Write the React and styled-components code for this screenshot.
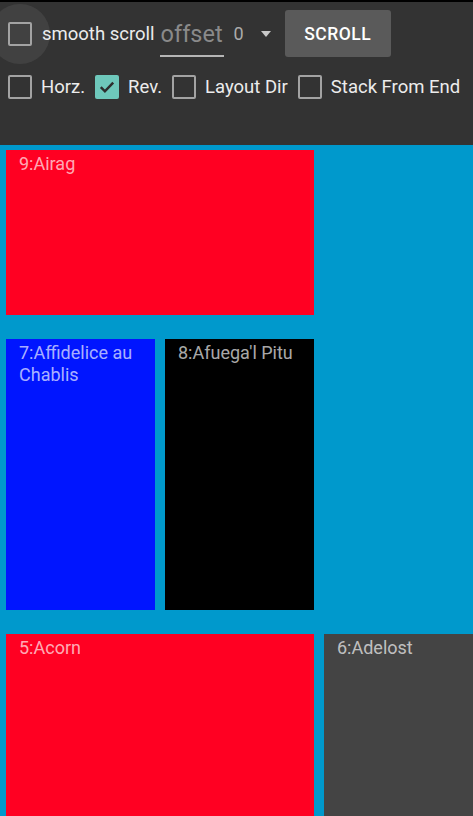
import React from 'react';
import styled, { createGlobalStyle } from 'styled-components';

const GlobalStyle = createGlobalStyle`
  html, body {
    margin: 0;
    padding: 0;
    background: #0099cc;
  }
  body {
    font-family: Roboto, "Noto Sans", sans-serif;
    overflow: hidden;
  }
`;

const Screen = styled.div`
  width: 473px;
  height: 816px;
  background: #0099cc;
  overflow: hidden;
`;

const Toolbar = styled.div`
  box-sizing: border-box;
  height: 145px;
  border-top: 2px solid #000;
  background: #333333;
  padding: 8px 0 0 8px;
`;

const TopRow = styled.div`
  display: flex;
  align-items: center;
  height: 47px;
`;

const OptionRow = styled.div`
  display: flex;
  align-items: center;
  height: 24px;
  margin-top: 18px;
  gap: 10px;
`;

const CheckItem = styled.label`
  position: relative;
  display: flex;
  align-items: center;
  gap: ${p => (p.$wide ? '10px' : '9px')};
  color: #ececec;
  font-size: 18.5px;
  white-space: nowrap;
`;

const Ripple = styled.span`
  position: absolute;
  left: -18px;
  top: 50%;
  width: 60px;
  height: 60px;
  margin-top: -30px;
  border-radius: 50%;
  background: rgba(255, 255, 255, 0.07);
`;

const Box = styled.span`
  position: relative;
  flex: none;
  box-sizing: border-box;
  width: 24px;
  height: 24px;
  border-radius: 2px;
  border: ${p => (p.$checked ? 'none' : '2.5px solid #a3a3a3')};
  background: ${p => (p.$checked ? '#6ec8bb' : 'transparent')};
  display: flex;
  align-items: center;
  justify-content: center;
`;

const OffsetField = styled.div`
  align-self: stretch;
  display: flex;
  align-items: center;
  margin-left: 5px;
  padding: 2px 1px 0;
  width: 64px;
  border-bottom: 2px solid #b5b5b5;
  box-sizing: border-box;
  color: #8a8a8a;
  font-size: 23.5px;
`;

const Spinner = styled.div`
  display: flex;
  align-items: center;
  margin-left: 10px;
  color: #ababab;
  font-size: 18px;
`;

const Caret = styled.span`
  margin-left: 17px;
  width: 0;
  height: 0;
  border-left: 5.5px solid transparent;
  border-right: 5.5px solid transparent;
  border-top: 6px solid #c8c8c8;
`;

const ScrollButton = styled.button`
  margin-left: 14px;
  width: 106px;
  height: 47px;
  border: none;
  border-radius: 3px;
  background: #5a5a5a;
  color: #ffffff;
  font-family: Roboto, "Noto Sans", sans-serif;
  font-size: 17.5px;
  font-weight: 500;
  letter-spacing: 0.5px;
  padding: 0;
`;

const Grid = styled.div`
  display: grid;
  grid-template-columns: repeat(3, 149px);
  grid-template-rows: 165px 271px 182px;
  column-gap: 10px;
  row-gap: 24px;
  padding: 5px 0 0 6px;
`;

const Card = styled.div`
  grid-column: span ${p => p.$span || 1};
  background: ${p => p.$color};
  color: rgba(255, 255, 255, 0.68);
  font-size: 18px;
  line-height: 21.5px;
  padding: 3px 13px 0;
`;

const CheckBox = ({ checked, label, ripple }) => (
  <CheckItem $wide={ripple}>
    {ripple && <Ripple />}
    <Box $checked={checked}>
      {checked && (
        <svg width="20" height="20" viewBox="0 0 20 20">
          <path d="M3.8 10.2l4.1 4.1 8.3-8.6" fill="none" stroke="#2e2e2e" strokeWidth="2.5" />
        </svg>
      )}
    </Box>
    {label}
  </CheckItem>
);

const cards = [
  { id: 9, name: 'Airag', color: '#ff0022', span: 2 },
  { id: 'gap', empty: true },
  { id: 7, name: 'Affidelice au Chablis', color: '#0015ff' },
  { id: 8, name: "Afuega'l Pitu", color: '#000000' },
  { id: 'gap2', empty: true },
  { id: 5, name: 'Acorn', color: '#ff0022', span: 2 },
  { id: 6, name: 'Adelost', color: '#444444' },
];

export default function App() {
  return (
    <Screen>
      <GlobalStyle />
      <Toolbar>
        <TopRow>
          <CheckBox ripple label="smooth scroll" />
          <OffsetField>offset</OffsetField>
          <Spinner>
            0
            <Caret />
          </Spinner>
          <ScrollButton>SCROLL</ScrollButton>
        </TopRow>
        <OptionRow>
          <CheckBox label="Horz." />
          <CheckBox checked label="Rev." />
          <CheckBox label="Layout Dir" />
          <CheckBox label="Stack From End" />
        </OptionRow>
      </Toolbar>
      <Grid>
        {cards.map(c =>
          c.empty ? (
            <div key={c.id} />
          ) : (
            <Card key={c.id} $span={c.span} $color={c.color}>
              {`${c.id}:${c.name}`}
            </Card>
          )
        )}
      </Grid>
    </Screen>
  );
}
